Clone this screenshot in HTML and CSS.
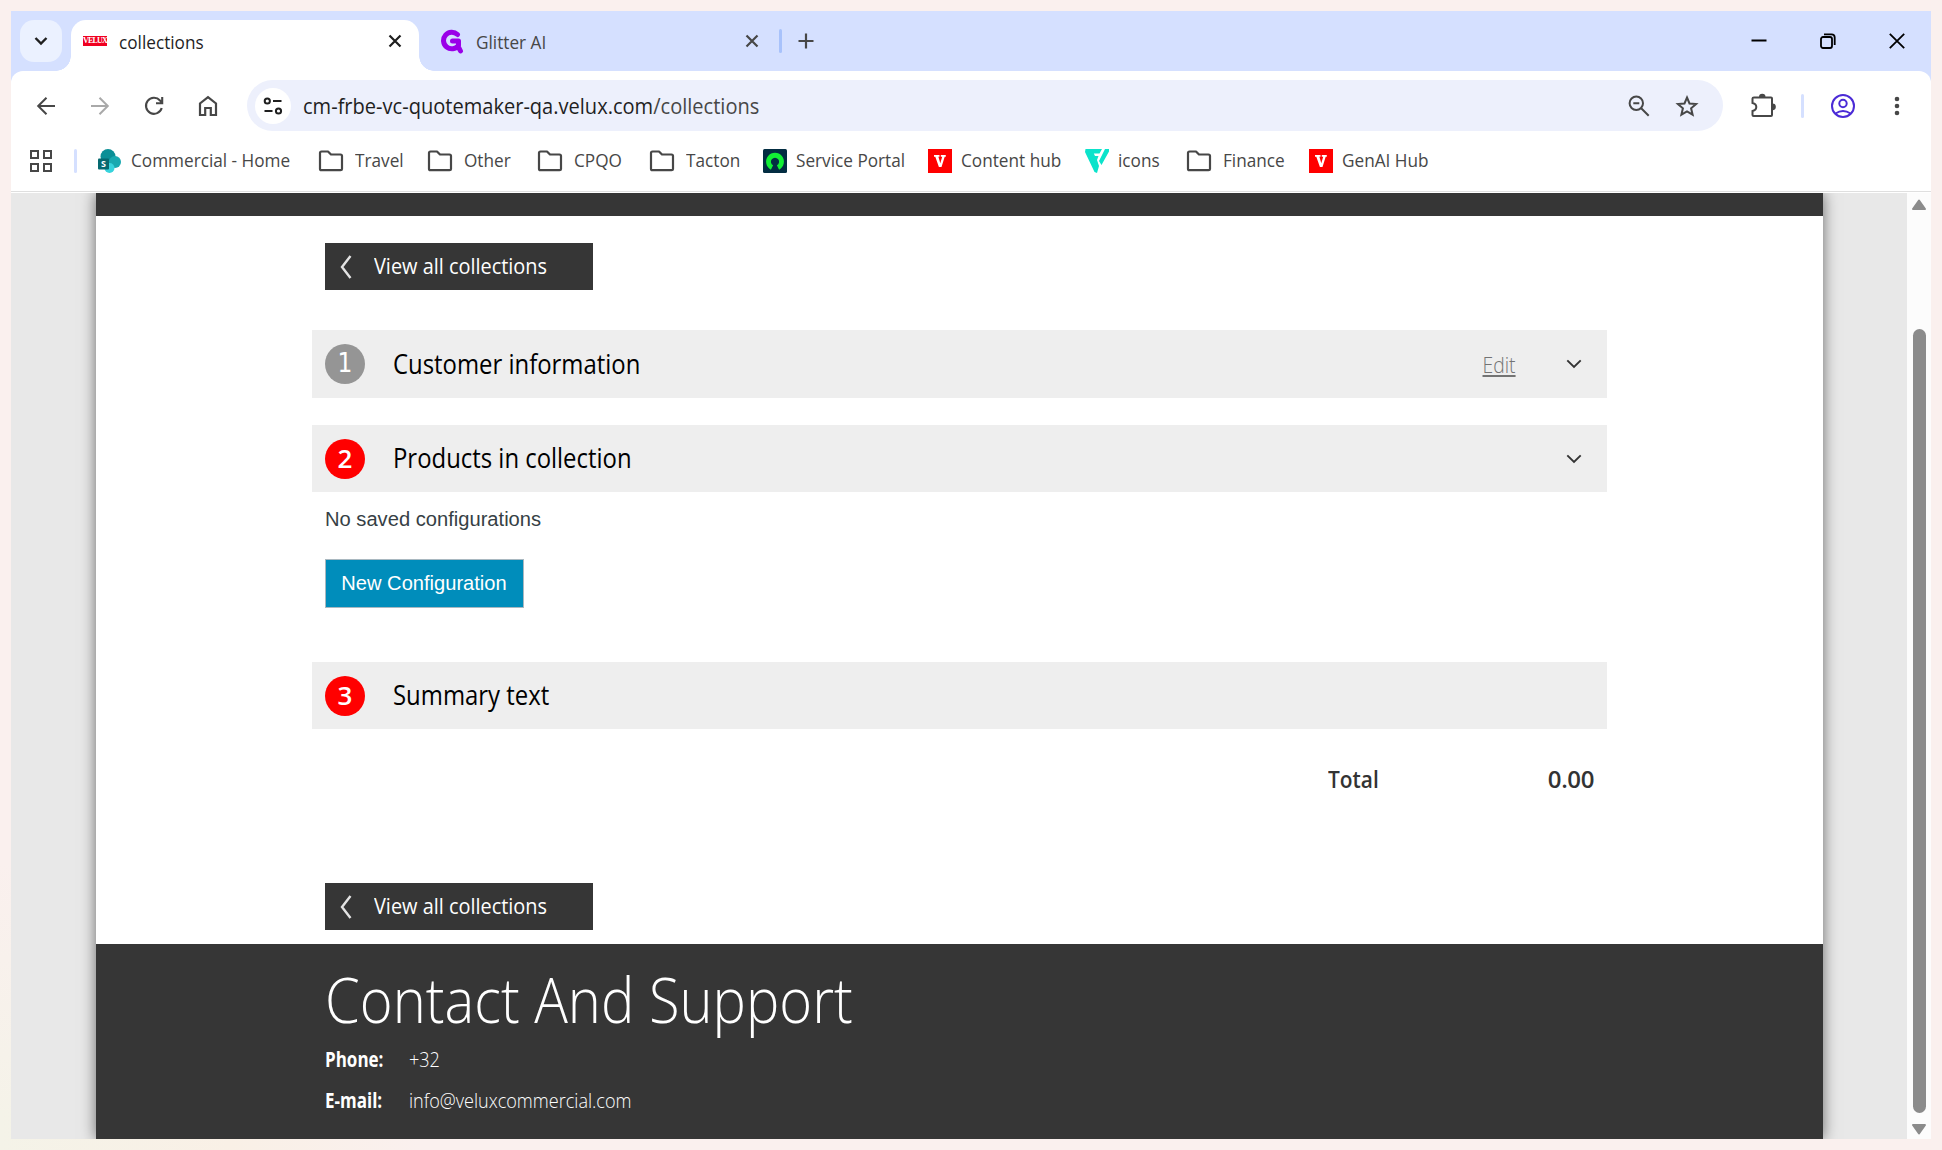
FILE: index.html
```html
<!DOCTYPE html>
<html lang="en">
<head>
  <meta charset="UTF-8">
  <meta name="viewport" content="width=device-width, initial-scale=1.0">
  <title>collections</title>
  <link rel="stylesheet" href="styles.css">
</head>
<body>
  <svg class="defs" width="0" height="0">
    <symbol id="folder" viewBox="0 0 26 22"><path d="M2 19V3q0-1.500 1.500-1.500h6.500l3 3h9.500q1.500 0 1.500 1.500v13q0 1.200-1.500 1.200H3.500Q2 20.200 2 19z" fill="none" stroke="#474747" stroke-width="2.200" stroke-linejoin="round"/></symbol>
    <symbol id="cross" viewBox="0 0 14 14"><path d="M1.500 1.500l11 11M12.500 1.500l-11 11" fill="none" stroke="currentColor" stroke-width="2.200"/></symbol>
    <symbol id="vlogo" viewBox="0 0 24 24"><path fill="#f00" d="M0 0h24v24H0z"/><path fill="#fff" d="M6 6h5.500v1.700h-1.100l1.900 6.500 1.900-6.500h-1.400V6h5v1.700h-1.100L13.500 18h-2.600L7.300 7.700H6z"/></symbol>
    <symbol id="down" viewBox="0 0 16 10"><path d="M1.300 1.300l6.700 6.700 6.700-6.700" fill="none" stroke="#333" stroke-width="1.900"/></symbol>
    <symbol id="left" viewBox="0 0 12 24"><path d="M10.500 1L2 12l8.500 11" fill="none" stroke="#e4e4e4" stroke-width="2.400"/></symbol>
  </svg>

  <div class="window">
    <div class="tabs">
      <div class="tab-search"><svg width="14" height="10" viewBox="0 0 14 10"><path d="M1.500 2L7 7.500 12.500 2" fill="none" stroke="#1f1f1f" stroke-width="2.400"/></svg></div>
      <div class="tab active">
        <span class="velux-icon">VELUX</span>
        <span class="t tab-title">collections</span>
        <svg class="close" width="14" height="14"><use href="#cross"/></svg>
      </div>
      <div class="tab">
        <svg width="23" height="25" viewBox="0 0 23 25"><path d="M16.500 5.500A8.300 8.300 0 1 0 17.500 16.500V12H11.500M17 17l2.500 5" fill="none" stroke="#9a00e8" stroke-width="5" stroke-linecap="round" stroke-linejoin="round"/></svg>
        <span class="t tab-title">Glitter AI</span>
        <svg class="close" width="14" height="14"><use href="#cross"/></svg>
      </div>
      <div class="tab-divider"></div>
      <svg class="plus" width="16" height="16" viewBox="0 0 16 16"><path d="M8 .5v15M.5 8h15" stroke="#474747" stroke-width="2.200"/></svg>
      <div class="controls">
        <svg width="16" height="16" viewBox="0 0 16 16"><path d="M.5 7.500h15" stroke="#000" stroke-width="2"/></svg>
        <svg width="16" height="16" viewBox="0 0 16 16" fill="none" stroke="#000" stroke-width="1.800"><rect x="1" y="4" width="11" height="11" rx="2"/><path d="M4 1.400h7.500q3.200 0 3.200 3.200V12"/></svg>
        <svg width="16" height="16" viewBox="0 0 16 16"><path d="M.8.800l14.400 14.400M15.200.8L.8 15.200" stroke="#000" stroke-width="1.800"/></svg>
      </div>
    </div>

    <div class="toolbar">
      <svg width="20" height="20" viewBox="0 0 20 20" fill="none" stroke="#474747" stroke-width="2"><path d="M19 10H2.500M10.500 1.700L2.200 10l8.300 8.300"/></svg>
      <svg width="20" height="20" viewBox="0 0 20 20" fill="none" stroke="#a9a9a9" stroke-width="2"><path d="M1 10h16.500M9.500 1.700l8.300 8.300-8.300 8.300"/></svg>
      <svg width="20" height="20" viewBox="0 0 20 20" fill="none" stroke="#474747" stroke-width="2.100"><path d="M17.700 12a8 8 0 1 1-1.700-7.500l2 2M18.200 1v6.200H12"/></svg>
      <svg width="20" height="22" viewBox="0 0 20 22" fill="none" stroke="#474747" stroke-width="2.200"><path d="M2 20V8.500l8-6.300 8 6.300V20h-5.200v-7H7.200v7z"/></svg>
      <div class="omnibox">
        <div class="site-info"><svg width="20" height="18" viewBox="0 0 20 18" fill="none" stroke="#1f1f1f" stroke-width="2"><circle cx="4.300" cy="4" r="2.600"/><circle cx="15.500" cy="14" r="2.600"/><path d="M10 4h8.500M1.500 14h8"/></svg></div>
        <span class="t url">cm-frbe-vc-quotemaker-qa.velux.com<i>/collections</i></span>
        <svg class="lens" width="22" height="22" viewBox="0 0 22 22" fill="none" stroke="#474747" stroke-width="2"><circle cx="8.300" cy="8.300" r="6.700"/><path d="M5.300 8.300h6M13.200 13.200l7.500 7.500"/></svg>
        <svg width="24" height="24" viewBox="0 0 24 24" fill="none" stroke="#474747" stroke-width="2"><path d="M12 3.500l2.500 6 6.600.5-5 4.300 1.500 6.400-5.600-3.400-5.600 3.400L7.900 14.300 2.900 10l6.600-.5z"/></svg>
      </div>
      <svg class="puzzle" width="26" height="26" viewBox="0 0 26 26"><path d="M4 4.500h17q1 0 1 1v16.500q0 1-1 1H3.500q-1 0-1-1V18q3.800-.8 3.800-4T2.500 10V5.500q0-1 1.500-1z" fill="none" stroke="#474747" stroke-width="2"/><path d="M9 4a3 3 0 0 1 6.500 0zM22.500 10.500a3.300 3.300 0 0 1 0 6.700z" fill="#474747"/></svg>
      <div class="divider"></div>
      <svg class="profile" width="24" height="24" viewBox="0 0 24 24" fill="none" stroke="#4b2bd6" stroke-width="2"><circle cx="12" cy="12" r="11"/><circle cx="12" cy="9.500" r="3.700"/><path d="M4.500 19.500q7.500-5 15 0"/></svg>
      <svg width="6" height="20" viewBox="0 0 6 20" fill="#474747"><circle cx="3" cy="3" r="2.300"/><circle cx="3" cy="10" r="2.300"/><circle cx="3" cy="17" r="2.300"/></svg>
    </div>

    <div class="bookmarks">
      <svg width="22" height="22" viewBox="0 0 22 22" fill="none" stroke="#474747" stroke-width="2"><path d="M1 1h7v7H1zM14 1h7v7h-7zM1 14h7v7H1zM14 14h7v7h-7z"/></svg>
      <div class="divider"></div>
      <div class="links">
        <a><svg width="24" height="24" viewBox="0 0 24 24"><circle cx="10" cy="7.500" r="7.500" fill="#0a8f96"/><circle cx="17" cy="13" r="6" fill="#19a9b0"/><circle cx="11.500" cy="19" r="5" fill="#37d3dc"/><rect y="9.500" width="11" height="11" rx="1" fill="#056970"/><text x="3" y="18" class="s-letter">S</text></svg><span class="t">Commercial - Home</span></a>
        <a class="f"><svg width="26" height="22"><use href="#folder"/></svg><span class="t">Travel</span></a>
        <a class="f"><svg width="26" height="22"><use href="#folder"/></svg><span class="t">Other</span></a>
        <a class="f"><svg width="26" height="22"><use href="#folder"/></svg><span class="t">CPQO</span></a>
        <a class="f"><svg width="26" height="22"><use href="#folder"/></svg><span class="t">Tacton</span></a>
        <a><svg width="24" height="24" viewBox="0 0 24 24"><rect width="24" height="24" rx="1.500" fill="#032d42"/><path d="M9 18.500A6.500 6.500 0 1 1 15 18.500" fill="none" stroke="#12ef35" stroke-width="4.800"/></svg><span class="t">Service Portal</span></a>
        <a><svg width="24" height="24"><use href="#vlogo"/></svg><span class="t">Content hub</span></a>
        <a><svg width="24" height="24" viewBox="0 0 24 24"><path fill="#0be3cb" d="M.5 0H17l-2.500 4.500H8.800L10 7h3.500L12 11l2 6-2 7-2.500-1L0 3zM20 0h4v2.500L16.500 16 14 12z"/></svg><span class="t">icons</span></a>
        <a class="f"><svg width="26" height="22"><use href="#folder"/></svg><span class="t">Finance</span></a>
        <a><svg width="24" height="24"><use href="#vlogo"/></svg><span class="t">GenAI Hub</span></a>
      </div>
    </div>

    <div class="viewport">
      <div class="page">
        <div class="topbar"></div>
        <div class="content">
          <a class="view-all"><svg width="12" height="24"><use href="#left"/></svg><span class="t">View all collections</span></a>

          <div class="section first">
            <span class="badge grey">1</span>
            <h2 class="t">Customer information</h2>
            <a class="t edit">Edit</a>
            <svg class="down" width="16" height="10"><use href="#down"/></svg>
          </div>
          <div class="section">
            <span class="badge">2</span>
            <h2 class="t">Products in collection</h2>
            <svg class="down" width="16" height="10"><use href="#down"/></svg>
          </div>
          <p class="empty">No saved configurations</p>
          <button class="new-config">New Configuration</button>
          <div class="section summary">
            <span class="badge">3</span>
            <h2 class="t">Summary text</h2>
          </div>
          <div class="total"><span class="t">Total</span><span class="amount">0.00</span></div>
          <a class="view-all"><svg width="12" height="24"><use href="#left"/></svg><span class="t">View all collections</span></a>
        </div>
        <footer>
          <h1 class="t">Contact And Support</h1>
          <div class="contact"><b class="t">Phone:</b><span class="t">+32</span></div>
          <div class="contact"><b class="t">E-mail:</b><span class="t">info@veluxcommercial.com</span></div>
        </footer>
      </div>
      <div class="scrollbar">
        <svg width="16" height="12" viewBox="0 0 16 12"><path d="M8 1.500l6 8.500H2z" fill="#8b8b8b" stroke="#8b8b8b" stroke-width="2" stroke-linejoin="round"/></svg>
        <div class="thumb"></div>
        <svg width="16" height="12" viewBox="0 0 16 12"><path d="M8 10.500L14 2H2z" fill="#8b8b8b" stroke="#8b8b8b" stroke-width="2" stroke-linejoin="round"/></svg>
      </div>
    </div>
  </div>
</body>
</html>
```
FILE: styles.css
```css
* {
  box-sizing: border-box;
}

body {
  margin: 0;
  height: 1150px;
  padding: 11px;
  overflow: hidden;
  background: linear-gradient(to right, #f4f3e8 0, #f9f0e6 230px, #faf0ee 420px) bottom / 100% 40px no-repeat, linear-gradient(#faf0ee 75%, #f4f3e8) left / 40px 100% no-repeat, #faf0ee;
  font-family: "Open Sans", "Noto Sans", sans-serif;
}

.defs {
  position: absolute;
}

svg {
  display: block;
  flex: none;
}

/* slightly condensed text */
.t {
  white-space: nowrap;
  transform: scaleX(0.955);
  transform-origin: 0 50%;
}

.window {
  width: 1920px;
  height: 1128px;
  background: #d5e0ff;
  overflow: hidden;
}

/* tab strip */
.tabs {
  display: flex;
  height: 60px;
  padding-top: 9px;
}

.tab-search {
  display: flex;
  align-items: center;
  justify-content: center;
  width: 42px;
  height: 42px;
  margin: 0 9px;
  border-radius: 14px;
  background: #ebf1ff;
}

.tab {
  position: relative;
  display: flex;
  align-items: center;
  width: 348px;
  height: 51px;
  padding: 0 17px 9px 12px;
  color: #474747;
  font-size: 18px;
}

.tab.active {
  background: #fff;
  border-radius: 15px 15px 0 0;
  color: #1f1f1f;
}

.tab.active::before,
.tab.active::after {
  content: "";
  position: absolute;
  bottom: 0;
  left: -15px;
  width: 15px;
  height: 15px;
  background: radial-gradient(circle at 0 0, transparent 14.5px, #fff 15px);
}

.tab.active::after {
  left: auto;
  right: -15px;
  background: radial-gradient(circle at 100% 0, transparent 14.5px, #fff 15px);
}

.velux-icon {
  width: 24px;
  height: 10px;
  background: #f00020;
  color: #fff;
  font: bold 8px/10px "Liberation Serif", serif;
  text-align: center;
  letter-spacing: -0.8px;
}

.tab-title {
  margin: 2px 0 0 12px;
}

.close {
  margin-left: auto;
}

.tab:not(.active) {
  width: 360px;
  padding: 0 20px 9px 22px;
}

.tab:not(.active) .tab-title {
  margin-left: 12px;
}

.tab-divider {
  width: 3px;
  height: 24px;
  margin-top: 9px;
  border-radius: 2px;
  background: #a8c2fb;
}

.plus {
  margin: 13px 0 0 16px;
}

.controls {
  display: flex;
  gap: 53px;
  margin: 13px 26px 0 auto;
}

/* toolbar */
.toolbar {
  display: flex;
  align-items: center;
  height: 69px;
  padding: 0 30px 0 25px;
  background: #fff;
  border-radius: 12px 12px 0 0;
}

.toolbar > svg {
  margin-right: 34px;
}

.toolbar > svg:nth-child(4) {
  margin-right: 29px;
}

.omnibox {
  display: flex;
  align-items: center;
  width: 1476px;
  height: 51px;
  padding: 0 24px 0 8px;
  border-radius: 26px;
  background: #edf0fc;
}

.site-info {
  display: flex;
  align-items: center;
  justify-content: center;
  width: 36px;
  height: 36px;
  margin-right: 12px;
  border-radius: 50%;
  background: #fff;
}

.url {
  color: #1f1f1f;
  font-size: 21px;
}

.url i {
  color: #474747;
  font-style: normal;
}

.lens {
  margin: 0 25px 0 auto;
}

.toolbar .puzzle {
  margin: 0 25px 0 27px;
}

.divider {
  width: 3px;
  height: 24px;
  border-radius: 2px;
  background: #d5e0ff;
}

.toolbar .profile {
  margin: 0 39px 0 27px;
}

.toolbar > svg:last-child {
  margin: 0;
}

/* bookmarks bar */
.bookmarks {
  display: flex;
  align-items: center;
  height: 52px;
  padding: 0 0 10px 19px;
  background: #fff;
  border-bottom: 1px solid #dfdfdf;
  box-shadow: 0 1px #fff;
}

.bookmarks .divider {
  margin: 0 21px 0 22px;
}

.links {
  display: grid;
  grid-template-columns: 220px 109px 110px 112px 114px 165px 157px 101px 123px 130px;
  color: #474747;
  font-size: 18px;
}

.links a {
  display: flex;
  align-items: center;
  height: 26px;
}

.links .t {
  margin: -1px 0 0 9px;
}

.links .f .t {
  margin-left: 11px;
}

.s-letter {
  fill: #fff;
  font: bold 9px "Open Sans", sans-serif;
}

/* page */
.viewport {
  display: flex;
  height: 946px;
  margin-top: 1px;
  padding-left: 85px;
  overflow: hidden;
  background: #e8e8e8;
}

.page {
  width: 1727px;
  background: #fff;
  box-shadow: 0 0 14px rgba(0, 0, 0, 0.55);
}

.topbar {
  height: 23px;
  background: #363636;
}

.content {
  display: flex;
  flex-direction: column;
  align-items: flex-start;
  height: 728px;
  padding: 27px 0 0 229px;
}

.view-all {
  display: flex;
  align-items: center;
  width: 268px;
  height: 47px;
  padding-left: 15px;
  background: #363636;
  color: #fff;
  font-size: 22px;
}

.view-all .t {
  margin: -3px 0 0 22px;
  transform: scaleX(0.905);
}

.section {
  display: flex;
  align-items: center;
  width: 1295px;
  height: 67px;
  margin: 27px 0 0 -13px;
  padding: 0 25px 0 13px;
  background: #eee;
}

.section.first {
  height: 68px;
  margin-top: 40px;
}

.badge {
  width: 40px;
  height: 40px;
  border-radius: 50%;
  background: #f00;
  color: #fff;
  font-size: 26px;
  font-weight: 600;
  line-height: 38px;
  text-align: center;
}

.badge.grey {
  background: #959595;
  font-family: "DejaVu Sans Condensed", "DejaVu Sans", sans-serif;
  font-weight: 400;
}

h2 {
  margin: -2px 0 0 28px;
  color: #000;
  font-size: 27px;
  font-weight: 400;
}

h2.t {
  transform: scaleX(0.885);
}

.down {
  margin-left: auto;
}

.edit {
  margin-left: auto;
  color: #737373;
  font-size: 22px;
  font-weight: 300;
  text-decoration: underline;
}

.edit.t {
  transform: scaleX(0.88);
  transform-origin: 100% 50%;
}

.edit + .down {
  margin-left: 50px;
}

.empty {
  margin: 13px 0 0;
  color: #363f45;
  font: 20.15px/28px "Liberation Sans", Arial, sans-serif;
}

.new-config {
  width: 199px;
  height: 49px;
  margin-top: 26px;
  padding: 0 1px 1px 0;
  border: 1px solid #a9b8c0;
  background: #008dbb;
  color: #fff;
  font: 20.1px "Liberation Sans", Arial, sans-serif;
}

.section.summary {
  margin-top: 54px;
}

.total {
  display: flex;
  width: 1269px;
  height: 154px;
  padding: 33px 0 0 1003px;
  color: #333;
  font-size: 24px;
  font-weight: 600;
}

.total .t {
  transform: scaleX(0.87);
}

.amount {
  margin-left: auto;
  letter-spacing: -0.4px;
}

footer {
  height: 195px;
  padding: 20px 0 0 229px;
  background: #363636;
  color: #fff;
}

h1 {
  margin: 0 0 5px;
  font-size: 63px;
  font-weight: 300;
  line-height: 70px;
}

h1.t {
  transform: scaleX(0.89);
}

.contact {
  display: grid;
  grid-template-columns: 84px 1fr;
  height: 41px;
  font-size: 21px;
  font-weight: 300;
  line-height: 41px;
}

.contact .t {
  transform: scaleX(0.86);
}

.contact b.t {
  font-weight: 700;
  transform: scaleX(0.81);
}

/* scrollbar */
.scrollbar {
  display: flex;
  flex-direction: column;
  align-items: center;
  width: 24px;
  margin-left: auto;
  padding: 6px 0 4px;
  background: #fcfcfc;
}

.thumb {
  width: 13px;
  height: 784px;
  margin: auto 0 10px;
  border-radius: 7px;
  background: #8b8b8b;
}
```
